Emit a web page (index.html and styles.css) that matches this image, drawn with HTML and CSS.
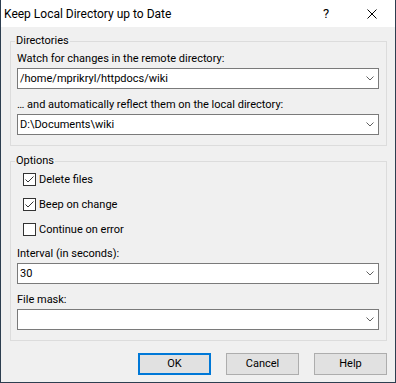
FILE: index.html
```html
<!DOCTYPE html>
<html>
<head>
<meta charset="utf-8">
<link rel="stylesheet" href="styles.css">
</head>
<body>
<div class="window">
  <div class="titlebar">
    <span class="title">Keep Local Directory up to Date</span>
    <span class="caption-btn help-btn">?</span>
    <span class="caption-btn close-btn"><svg width="10" height="10" viewBox="0 0 10 10"><path d="M0.5 0.5 L9.5 9.5 M9.5 0.5 L0.5 9.5" stroke="#000" stroke-width="1" fill="none"/></svg></span>
  </div>
  <div class="content">
    <fieldset class="group group-dirs">
      <legend>Directories</legend>
      <label class="field-label">Watch for changes in the remote directory:</label>
      <div class="combo"><span class="combo-text">/home/mprikryl/httpdocs/wiki</span><svg class="chev" width="8" height="5" viewBox="0 0 8 5"><path d="M0.5 0.5 L4 4 L7.5 0.5" stroke="#606060" stroke-width="1" fill="none"/></svg></div>
      <label class="field-label next">… and automatically reflect them on the local directory:</label>
      <div class="combo"><span class="combo-text">D:\Documents\wiki</span><svg class="chev" width="8" height="5" viewBox="0 0 8 5"><path d="M0.5 0.5 L4 4 L7.5 0.5" stroke="#606060" stroke-width="1" fill="none"/></svg></div>
    </fieldset>
    <fieldset class="group group-opts">
      <legend>Options</legend>
      <div class="check-row"><svg class="checkbox" width="13" height="13" viewBox="0 0 13 13"><rect x="0.5" y="0.5" width="12" height="12" fill="#fff" stroke="#333"/><path d="M2.5 6.5 L5 9 L10.5 3.5" stroke="#333" stroke-width="1" fill="none"/></svg><span class="check-label">Delete files</span></div>
      <div class="check-row"><svg class="checkbox" width="13" height="13" viewBox="0 0 13 13"><rect x="0.5" y="0.5" width="12" height="12" fill="#fff" stroke="#333"/><path d="M2.5 6.5 L5 9 L10.5 3.5" stroke="#333" stroke-width="1" fill="none"/></svg><span class="check-label">Beep on change</span></div>
      <div class="check-row"><svg class="checkbox" width="13" height="13" viewBox="0 0 13 13"><rect x="0.5" y="0.5" width="12" height="12" fill="#fff" stroke="#333"/></svg><span class="check-label">Continue on error</span></div>
      <label class="field-label next">Interval (in seconds):</label>
      <div class="combo"><span class="combo-text">30</span><svg class="chev" width="8" height="5" viewBox="0 0 8 5"><path d="M0.5 0.5 L4 4 L7.5 0.5" stroke="#606060" stroke-width="1" fill="none"/></svg></div>
      <label class="field-label next">File mask:</label>
      <div class="combo"><span class="combo-text"></span><svg class="chev" width="8" height="5" viewBox="0 0 8 5"><path d="M0.5 0.5 L4 4 L7.5 0.5" stroke="#606060" stroke-width="1" fill="none"/></svg></div>
    </fieldset>
    <div class="buttons">
      <span class="btn btn-default">OK</span>
      <span class="btn">Cancel</span>
      <span class="btn">Help</span>
    </div>
  </div>
</div>
</body>
</html>
```

FILE: styles.css
```css
html, body {
  margin: 0;
  padding: 0;
}
body {
  font-family: Roboto, "Liberation Sans", sans-serif;
  font-size: 11px;
  color: #000;
}
.window {
  width: 396px;
  height: 383px;
  box-sizing: border-box;
  border: 1px solid #2d3e50;
  border-top: 0;
  background: #f0f0f0;
  display: flex;
  flex-direction: column;
}
.titlebar {
  height: 27px;
  background: #fff;
  display: flex;
  align-items: center;
  flex-shrink: 0;
}
.title {
  flex: 1;
  padding-left: 3px;
  font-size: 12px;
  line-height: 16px;
}
.caption-btn {
  width: 46px;
  height: 27px;
  display: flex;
  align-items: center;
  justify-content: center;
}
.help-btn {
  font-size: 13px;
}
.content {
  padding: 6px 8px 0 9px;
  display: flex;
  flex-direction: column;
}
.group {
  margin: 0;
  border: 1px solid #dcdcdc;
  padding: 2px 7px 10px 6px;
  min-width: 0;
  display: flex;
  flex-direction: column;
}
.group legend {
  padding: 0 1px;
  margin-left: -2px;
  line-height: 16px;
}
.group-opts {
  margin-top: 7px;
}
.field-label {
  display: block;
  line-height: 16px;
  white-space: nowrap;
}
.field-label.next {
  margin-top: 8px;
}
.combo {
  margin-top: 1px;
  height: 21px;
  box-sizing: border-box;
  border: 1px solid #7a7a7a;
  background: #fff;
  display: flex;
  align-items: center;
  padding: 0 4px 0 2px;
}
.combo-text {
  flex: 1;
  line-height: 16px;
  white-space: nowrap;
}
.chev {
  display: block;
}
.check-row {
  height: 17px;
  display: flex;
  align-items: center;
  margin-bottom: 8px;
}
.check-row:nth-of-type(3) {
  margin-bottom: 0;
}
.checkbox {
  display: block;
  margin-left: 6px;
}
.check-label {
  margin-left: 3px;
  line-height: 16px;
}
.buttons {
  margin-top: 12px;
  display: flex;
  justify-content: flex-end;
  gap: 15px;
}
.btn {
  width: 73px;
  height: 22px;
  box-sizing: border-box;
  border: 1px solid #adadad;
  background: #e1e1e1;
  display: flex;
  align-items: center;
  justify-content: center;
  line-height: 16px;
}
.btn-default {
  border: 2px solid #0078d7;
}
```
